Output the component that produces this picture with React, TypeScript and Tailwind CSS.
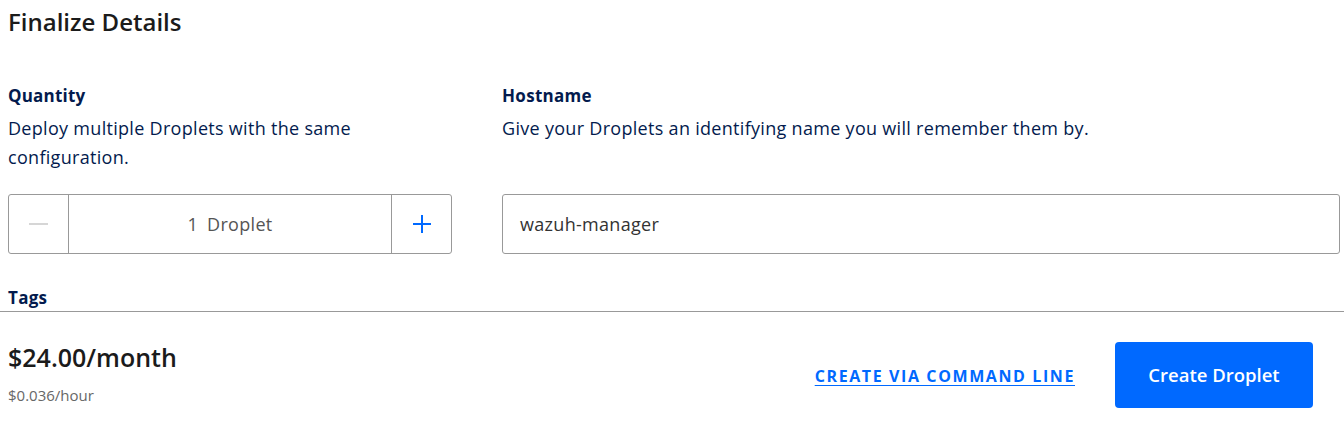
import React from "react";

export default function App() {
  return (
    <div className="w-[1344px] h-[427px] bg-white overflow-hidden relative" style={{ fontFamily: '"Open Sans", "Lato", sans-serif' }}>
      <div className="pl-2 pr-1">
        <h1 className="text-[24px] leading-[44px] font-semibold text-[#1b1b1b]">Finalize Details</h1>
        <div className="mt-[39px] grid grid-cols-[444px_1fr] gap-x-[50px]">
          <div className="flex flex-col">
            <div className="text-[17px] leading-[26px] font-bold text-[#031b4e] tracking-[0.2px]">Quantity</div>
            <div className="mt-[5px] text-[18px] leading-[29px] tracking-[0.3px] text-[#031b4e] w-[380px]">Deploy multiple Droplets with the same configuration.</div>
          </div>
          <div className="flex flex-col">
            <div className="text-[17px] leading-[26px] font-bold text-[#031b4e] tracking-[0.3px]">Hostname</div>
            <div className="mt-[5px] text-[18px] leading-[29px] tracking-[0.3px] text-[#031b4e]">Give your Droplets an identifying name you will remember them by.</div>
          </div>
          <div className="mt-[22px] h-[60px] flex border border-[#999] rounded-[3px]">
            <div className="w-[60px] flex items-center justify-center border-r border-[#999]">
              <div className="w-[19px] h-[2px] bg-[#d6d6d6]" />
            </div>
            <div className="flex-1 flex items-center justify-center text-[18px] tracking-[0.3px] text-[#555]">1<span className="ml-[9px]">Droplet</span></div>
            <div className="w-[60px] flex items-center justify-center border-l border-[#999]">
              <svg width="20" height="20" viewBox="0 0 20 20"><path d="M10 1v18M1 10h18" stroke="#0069ff" strokeWidth="2" /></svg>
            </div>
          </div>
          <div className="mt-[22px] h-[60px] flex items-center border border-[#999] rounded-[3px] px-[17px] text-[18px] tracking-[0.3px] text-[#333]">wazuh-manager</div>
        </div>
        <div className="mt-[31px] text-[17px] leading-[26px] font-bold text-[#031b4e] tracking-[0.3px]">Tags</div>
      </div>
      <div className="absolute left-0 right-0 top-[311px] bottom-0 bg-white border-t border-[#999] flex items-center pt-[11px] pl-2 pr-[31px]">
        <div className="flex-1 flex flex-col mb-[5px]">
          <div className="text-[25px] leading-[32px] font-semibold text-[#1b1b1b]">$24.00/month</div>
          <div className="mt-[13px] text-[15px] leading-[18px] text-[#676767]">$0.036/hour</div>
        </div>
        <a className="text-[16px] font-bold tracking-[0.1em] text-[#0069ff] underline underline-offset-[3px] mr-[40px] mt-[2px]">CREATE VIA COMMAND LINE</a>
        <button className="w-[198px] h-[66px] rounded-[4px] bg-[#0069ff] text-white text-[18.5px] font-semibold">Create Droplet</button>
      </div>
    </div>
  );
}
